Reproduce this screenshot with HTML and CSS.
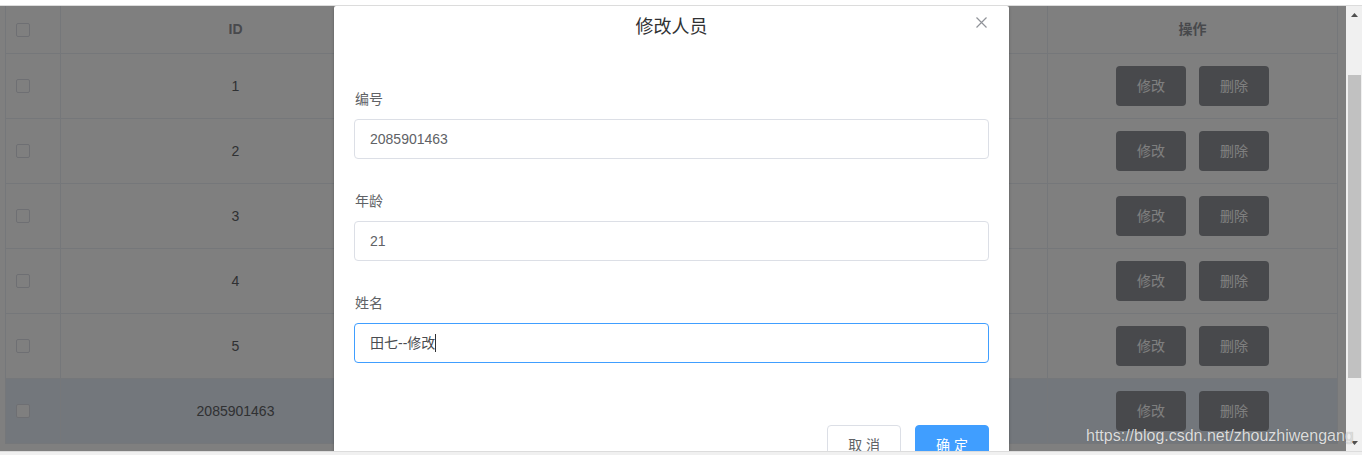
FILE: index.html
```html
<!DOCTYPE html>
<html lang="zh-CN">
<head>
<meta charset="utf-8">
<title>修改人员</title>
<link rel="stylesheet" href="styles.css">
</head>
<body>
<div class="topbar"></div>
<div class="frame">
  <div class="page">
    <div class="table">
      <div class="row head">
        <div class="cell sel"><span class="checkbox"></span></div>
        <div class="cell">ID</div>
        <div class="cell">姓名</div>
        <div class="cell">年龄</div>
        <div class="cell">操作</div>
      </div>
      <div class="row">
        <div class="cell sel"><span class="checkbox"></span></div>
        <div class="cell">1</div>
        <div class="cell">张三</div>
        <div class="cell">18</div>
        <div class="cell ops"><span class="tbtn">修改</span><span class="tbtn">删除</span></div>
      </div>
      <div class="row">
        <div class="cell sel"><span class="checkbox"></span></div>
        <div class="cell">2</div>
        <div class="cell">李四</div>
        <div class="cell">19</div>
        <div class="cell ops"><span class="tbtn">修改</span><span class="tbtn">删除</span></div>
      </div>
      <div class="row">
        <div class="cell sel"><span class="checkbox"></span></div>
        <div class="cell">3</div>
        <div class="cell">王五</div>
        <div class="cell">20</div>
        <div class="cell ops"><span class="tbtn">修改</span><span class="tbtn">删除</span></div>
      </div>
      <div class="row">
        <div class="cell sel"><span class="checkbox"></span></div>
        <div class="cell">4</div>
        <div class="cell">赵六</div>
        <div class="cell">22</div>
        <div class="cell ops"><span class="tbtn">修改</span><span class="tbtn">删除</span></div>
      </div>
      <div class="row">
        <div class="cell sel"><span class="checkbox"></span></div>
        <div class="cell">5</div>
        <div class="cell">钱七</div>
        <div class="cell">23</div>
        <div class="cell ops"><span class="tbtn">修改</span><span class="tbtn">删除</span></div>
      </div>
      <div class="row current">
        <div class="cell sel"><span class="checkbox"></span></div>
        <div class="cell">2085901463</div>
        <div class="cell">田七</div>
        <div class="cell">21</div>
        <div class="cell ops"><span class="tbtn">修改</span><span class="tbtn">删除</span></div>
      </div>
    </div>
    <div class="overlay"></div>
    <div class="dialog">
      <div class="dialog-header">
        <span class="dialog-title">修改人员</span>
        <svg class="dialog-close" viewBox="0 0 11 11" width="11" height="11"><path d="M0.5 0.5 L10.5 10.5 M10.5 0.5 L0.5 10.5" stroke="#909399" stroke-width="1.2" fill="none"/></svg>
      </div>
      <div class="dialog-body">
        <div class="form-item">
          <div class="form-label">编号</div>
          <div class="input">2085901463</div>
        </div>
        <div class="form-item">
          <div class="form-label">年龄</div>
          <div class="input">21</div>
        </div>
        <div class="form-item">
          <div class="form-label">姓名</div>
          <div class="input focus">田七--修改<span class="caret"></span></div>
        </div>
      </div>
      <div class="dialog-footer">
        <span class="btn">取 消</span>
        <span class="btn primary">确 定</span>
      </div>
    </div>
  </div>
  <div class="scrollbar">
    <div class="sb-btn"><svg viewBox="0 0 7 4" width="7" height="4"><polygon points="0,4 3.5,0 7,4" fill="#505050"/></svg></div>
    <div class="sb-track"><div class="sb-thumb"></div></div>
    <div class="sb-btn"><svg viewBox="0 0 7 4" width="7" height="4"><polygon points="0,0 7,0 3.5,4" fill="#505050"/></svg></div>
  </div>
</div>
<div class="bottombar"></div>
<div class="watermark">https://blog.csdn.net/zhouzhiwengang</div>
</body>
</html>
```

FILE: styles.css
```css
* { box-sizing: border-box; }
html, body { margin: 0; padding: 0; }
body {
  width: 1362px;
  height: 455px;
  overflow: hidden;
  background: #fff;
  font-family: "Liberation Sans", "Noto Sans CJK SC", sans-serif;
  position: relative;
}
.topbar {
  height: 6px;
  background: #fff;
  border-bottom: 1px solid #dcdcdc;
}
.frame {
  display: flex;
  height: 445px;
}
.page {
  width: 1346px;
  height: 445px;
  position: relative;
  overflow: hidden;
  background: #fff;
}
.table {
  margin-left: 5px;
  width: 1333px;
  border-left: 1px solid #ebeef5;
}
.row {
  display: grid;
  grid-template-columns: 55px 350px 318px 319px 290px;
  height: 65px;
}
.row.head { height: 48px; }
.cell {
  display: flex;
  align-items: center;
  justify-content: center;
  border-right: 1px solid #ebeef5;
  border-bottom: 1px solid #ebeef5;
  font-size: 14px;
  line-height: 23px;
  color: #606266;
  background: #fff;
}
.row.head .cell {
  color: #909399;
  font-weight: bold;
}
.row.current .cell { background: #e6eef8; }
.cell.sel {
  justify-content: flex-start;
  padding-left: 10px;
}
.checkbox {
  width: 14px;
  height: 14px;
  border: 1px solid #dcdfe6;
  border-radius: 2px;
  background: #fff;
}
.cell.ops { gap: 13px; }
.tbtn {
  width: 70px;
  height: 40px;
  border-radius: 4px;
  background: #909399;
  color: #fff;
  font-size: 14px;
  display: flex;
  align-items: center;
  justify-content: center;
}
.overlay {
  position: absolute;
  inset: 0;
  background: rgba(0, 0, 0, 0.5);
  z-index: 1;
}
.dialog {
  position: absolute;
  left: 334px;
  top: 0;
  width: 675px;
  background: #fff;
  border-radius: 2px;
  box-shadow: 0 1px 3px rgba(0, 0, 0, 0.3);
  z-index: 2;
}
.dialog-header {
  position: relative;
  padding: 9px 20px 10px;
  text-align: center;
  height: 43px;
}
.dialog-title {
  font-size: 18px;
  line-height: 24px;
  color: #303133;
}
.dialog-close {
  position: absolute;
  top: 11px;
  right: 22px;
}
.dialog-body { padding: 30px 20px; }
.form-item { margin-bottom: 22px; }
.form-label {
  font-size: 14px;
  line-height: 40px;
  height: 40px;
  color: #606266;
  padding-left: 1px;
}
.input {
  height: 40px;
  border: 1px solid #dcdfe6;
  border-radius: 4px;
  padding: 0 15px;
  display: flex;
  align-items: center;
  font-size: 14px;
  line-height: 20px;
  color: #606266;
}
.input.focus { border-color: #409eff; color: #4a4c50; }
.caret {
  width: 1px;
  height: 18px;
  background: #303133;
}
.dialog-footer {
  padding: 10px 20px 20px;
  display: flex;
  justify-content: flex-end;
  gap: 14px;
}
.btn {
  height: 40px;
  padding: 0 20px;
  border: 1px solid #dcdfe6;
  border-radius: 4px;
  background: #fff;
  color: #606266;
  font-size: 14px;
  line-height: 38px;
  white-space: pre;
}
.btn.primary {
  background: #409eff;
  border-color: #409eff;
  color: #fff;
}
.scrollbar {
  width: 16px;
  height: 445px;
  background: #f0f0f0;
  display: flex;
  flex-direction: column;
}
.sb-btn {
  height: 17px;
  display: flex;
  align-items: center;
  justify-content: center;
}
.sb-btn svg { display: block; margin-left: 1px; }
.sb-track {
  flex: 1;
  padding-top: 52px;
}
.sb-thumb {
  margin-left: 2px;
  width: 13px;
  height: 303px;
  background: #c1c1c1;
}
.bottombar {
  height: 4px;
  border-top: 1px solid #dcdcdc;
  background: #f0f0f0;
}
.watermark {
  position: absolute;
  left: 1086px;
  top: 427px;
  font-family: "Liberation Sans", sans-serif;
  font-size: 16px;
  line-height: 18px;
  color: #dcdcdc;
  text-shadow: 0 0 1px rgba(0, 0, 0, 0.25);
  white-space: nowrap;
  z-index: 10;
}
```
